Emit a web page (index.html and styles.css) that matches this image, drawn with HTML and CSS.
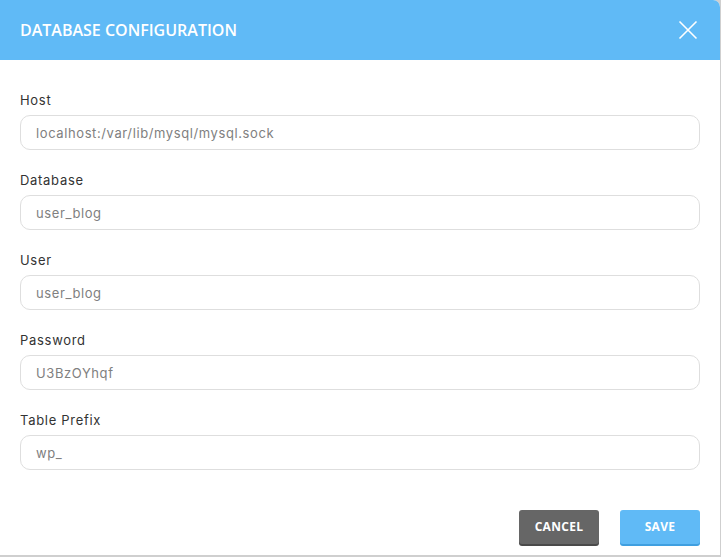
FILE: index.html
```html
<!DOCTYPE html>
<html>
<head>
<meta charset="utf-8">
<link rel="stylesheet" href="styles.css">
</head>
<body>
<div class="modal">
  <div class="modal-header">
    <h1 class="modal-title">DATABASE CONFIGURATION</h1>
    <button class="close" aria-label="Close">
      <svg width="20" height="20" viewBox="0 0 20 20"><path d="M1.5 1.5 L18.5 18.5 M18.5 1.5 L1.5 18.5" stroke="#fff" stroke-width="1.6" fill="none"/></svg>
    </button>
  </div>
  <div class="modal-body">
    <div class="field">
      <label class="label">Host</label>
      <div class="input">localhost:/var/lib/mysql/mysql.sock</div>
    </div>
    <div class="field">
      <label class="label">Database</label>
      <div class="input">user_blog</div>
    </div>
    <div class="field">
      <label class="label">User</label>
      <div class="input">user_blog</div>
    </div>
    <div class="field">
      <label class="label">Password</label>
      <div class="input">U3BzOYhqf</div>
    </div>
    <div class="field">
      <label class="label">Table Prefix</label>
      <div class="input">wp_</div>
    </div>
  </div>
  <div class="modal-footer">
    <button class="btn btn-cancel">CANCEL</button>
    <button class="btn btn-save">SAVE</button>
  </div>
</div>
</body>
</html>
```

FILE: styles.css
```css
html, body {
  margin: 0;
  padding: 0;
}
body {
  background: #cfcfcf;
  width: 721px;
  height: 557px;
  overflow: hidden;
}
.modal {
  width: 720px;
  height: 555px;
  background: #fff;
  border-radius: 0 7px 0 0;
  overflow: hidden;
  display: flex;
  flex-direction: column;
}
.modal-header {
  height: 60px;
  background: #60baf6;
  display: flex;
  align-items: center;
  justify-content: space-between;
  padding: 0 22px 0 20px;
  flex: none;
}
.modal-title {
  margin: 0;
  font-family: "Open Sans", sans-serif;
  font-weight: 600;
  font-size: 16px;
  color: #fff;
}
.close {
  background: none;
  border: 0;
  padding: 0;
  width: 20px;
  height: 20px;
  display: flex;
}
.modal-body {
  padding: 30px 20px 0;
  display: flex;
  flex-direction: column;
  gap: 20px;
}
.field {
  display: flex;
  flex-direction: column;
  gap: 5px;
}
.label {
  font-family: Inter, "Noto Sans", sans-serif;
  font-size: 13px;
  line-height: 20px;
  color: #333;
  letter-spacing: 0.7px;
}
.input {
  box-sizing: border-box;
  height: 35px;
  border: 1px solid #dedede;
  border-radius: 10px;
  padding: 0 15px;
  display: flex;
  align-items: center;
  font-family: Inter, "Noto Sans", sans-serif;
  font-size: 13px;
  color: #808080;
  letter-spacing: 0.6px;
}
.modal-footer {
  display: flex;
  justify-content: flex-end;
  gap: 21px;
  padding: 40px 20px 0;
}
.btn {
  width: 80px;
  height: 34px;
  border: 0;
  border-radius: 3px;
  font-family: "Open Sans", sans-serif;
  font-weight: 700;
  font-size: 12px;
  color: #fff;
  letter-spacing: 0.3px;
  padding: 0;
  line-height: 32px;
}
.btn-cancel {
  background: #666;
  box-shadow: 0 2px 0 #4a4a4a;
}
.btn-save {
  background: #60baf6;
  box-shadow: 0 2px 0 #3f9fe0;
}
```
